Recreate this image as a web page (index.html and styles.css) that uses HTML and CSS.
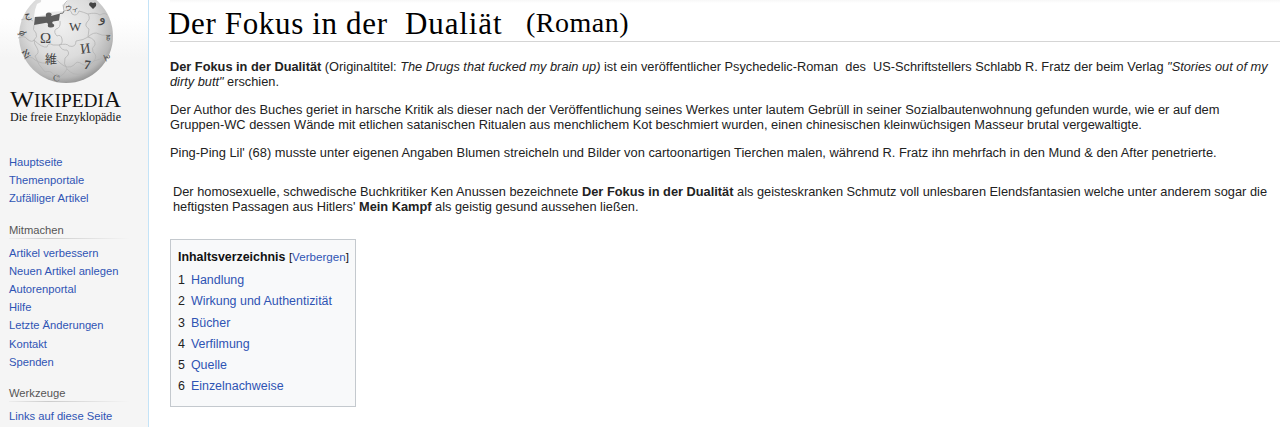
FILE: index.html
```html
<!DOCTYPE html>
<html lang="de">
<head>
    <meta charset="UTF-8">
    <meta name="viewport" content="width=device-width, initial-scale=1.0">
    <title>Der Fokus in der Dualität (Roman) – Wikipedia</title>
    <link rel="stylesheet" href="styles.css">
</head>
<body>
    <aside class="sidebar">
        <svg class="logo" width="140" height="130" viewBox="0 0 140 130">
            <defs>
                <radialGradient id="globe" cx="0.45" cy="0.38" r="0.66">
                    <stop offset="0" stop-color="#f0f0f0"/>
                    <stop offset="0.55" stop-color="#dcdcdc"/>
                    <stop offset="0.85" stop-color="#b8b8b8"/>
                    <stop offset="1" stop-color="#888"/>
                </radialGradient>
            </defs>
            <circle cx="66" cy="36" r="47" fill="url(#globe)"/>
            <!-- opening at the top -->
            <path d="M42 -12 L41 2 L37 4 L35 10 L34 17 L45 15 L50 12 L64 11 L62 5 L67 2 L66 -12 Z" fill="#fdfdfd"/>
            <path d="M35 17 L46 16.500 Q45 12.500 49 12.500 Q53 13 51 16 L60 13.500 L59 20.500 L53 21.500 Q51 23 54 24.500 Q55 27.500 51 27.500 Q47 28 48 24 Q47 22 45 23 L34 25 Z" fill="#5c5c5c"/>
            <path d="M60 13.500 Q64 14 64 11" fill="none" stroke="#777"/>
            <g class="seams">
                <path d="M21 20 Q28 17 33 21 M34 25 Q32 30 36 33 Q38 37 34 40 Q34 44 37 48 Q40 53 35 56 Q38 65 45 72"/>
                <path d="M60 21 Q61 28 56 29 Q53 32 57 36 Q61 34 62 39 Q63 44 59 45 M59 45 Q67 43 69 46 Q76 48 76 41 Q84 40 88 37"/>
                <path d="M18 38 Q25 35 27 39 Q32 43 34 40 Q42 48 47 47 Q48 42 53 45 L59 45 Q62 51 67 50 Q71 54 65 58 Q63 64 67 69"/>
                <path d="M64 11 Q71 8 72 14 Q77 17 79 11 Q83 12 88 14 Q91 19 87 22 Q84 26 89 29 L88 37 Q96 39 95 45 Q91 48 93 52 Q98 56 94 61"/>
                <path d="M24 59 Q31 55 35 60 Q43 65 49 62 Q56 57 60 63 Q68 70 74 65 Q77 60 82 64 Q88 68 94 61 Q102 60 109 53"/>
                <path d="M88 14 Q96 12 100 15 Q105 12 107 15 M88 37 Q94 31 99 34 Q105 37 112 33 M45 72 Q51 70 54 75 Q61 80 67 69 Q73 76 82 74"/>
                <path d="M64 11 Q62 5 67 1"/>
            </g>
            <g class="glyphs">
                <text x="40" y="43" font-size="15">Ω</text>
                <text x="69" y="31" font-size="13">W</text>
                <text x="80" y="53" font-size="14" transform="rotate(-8 86 47)">И</text>
                <text x="45" y="64" font-size="12">維</text>
                <text x="84" y="69" font-size="13" font-weight="bold" transform="rotate(8 87 65)">7</text>
                <text x="65" y="11" font-size="7" transform="rotate(8 70 8)">ウィ</text>
                <text x="99" y="22" font-size="14">و</text>
                <text x="24" y="18" font-size="10" transform="rotate(-15 27 15)">ج</text>
                <text x="20" y="38" font-size="10" transform="rotate(75 24 34)">ɸ</text>
                <text x="21" y="56" font-size="9" transform="rotate(60 25 54)">ℵi</text>
                <text x="106" y="40" font-size="8">ह</text>
                <text x="102" y="60" font-size="8" transform="rotate(-50 106 57)">ん</text>
                <text x="54" y="79" font-size="9" transform="rotate(15 58 76)">ල</text>
                <path d="M89 5 Q89 1 93 3 Q97 1 96 6 L93 9 Z"/>
            </g>
            <g class="wordmark">
                <text x="10" y="107" font-size="24" textLength="24" lengthAdjust="spacingAndGlyphs">W</text>
                <text x="34" y="107" font-size="19" textLength="70" lengthAdjust="spacingAndGlyphs">IKIPEDI</text>
                <text x="104" y="107" font-size="24" textLength="17" lengthAdjust="spacingAndGlyphs">A</text>
                <text x="10" y="120.500" font-size="12" textLength="111">Die freie Enzyklopädie</text>
            </g>
        </svg>
        <nav>
            <ul class="main-links">
                <li><a>Hauptseite</a></li>
                <li><a>Themenportale</a></li>
                <li><a>Zufälliger Artikel</a></li>
            </ul>
            <h3>Mitmachen</h3>
            <ul>
                <li><a>Artikel verbessern</a></li>
                <li><a>Neuen Artikel anlegen</a></li>
                <li><a>Autorenportal</a></li>
                <li><a>Hilfe</a></li>
                <li><a>Letzte Änderungen</a></li>
                <li><a>Kontakt</a></li>
                <li><a>Spenden</a></li>
            </ul>
            <h3>Werkzeuge</h3>
            <ul>
                <li><a>Links auf diese Seite</a></li>
            </ul>
        </nav>
    </aside>
    <main>
        <h1><span class="title">Der Fokus in der</span><span class="title-name">Dualiät</span><span class="title-type">(Roman)</span></h1>
        <p class="intro"><b>Der Fokus in der Dualität</b> (Originaltitel: <i>The Drugs that fucked my brain up)</i> ist ein veröffentlicher Psychedelic-Roman&nbsp; des&nbsp; US-Schriftstellers Schlabb R. Fratz der beim Verlag <i>"Stories out of my<br>dirty butt"</i> erschien.</p>
        <p class="critique">Der Author des Buches geriet in harsche Kritik als dieser nach der Veröffentlichung seines Werkes unter lautem Gebrüll in seiner Sozialbautenwohnung gefunden wurde, wie er auf dem<br><span>Gruppen-WC dessen Wände mit etlichen satanischen Ritualen aus menchlichem Kot beschmiert wurden, einen chinesischen kleinwüchsigen Masseur brutal vergewaltigte.</span></p>
        <p class="victim">Ping-Ping Lil' (68) musste unter eigenen Angaben Blumen streicheln und Bilder von cartoonartigen Tierchen malen, während R. Fratz ihn mehrfach in den Mund &amp; den After penetrierte.</p>
        <p class="review">Der homosexuelle, schwedische Buchkritiker Ken Anussen bezeichnete <b>Der Fokus in der Dualität</b> als geisteskranken Schmutz voll unlesbaren Elendsfantasien welche unter anderem sogar die<br>heftigsten Passagen aus Hitlers' <b>Mein Kampf</b> als geistig gesund aussehen ließen.</p>
        <div class="toc">
            <h2>Inhaltsverzeichnis <span>[<a>Verbergen</a>]</span></h2>
            <ul>
                <li><span>1</span><a>Handlung</a></li>
                <li><span>2</span><a>Wirkung und Authentizität</a></li>
                <li><span>3</span><a>Bücher</a></li>
                <li><span>4</span><a>Verfilmung</a></li>
                <li><span>5</span><a>Quelle</a></li>
                <li><span>6</span><a>Einzelnachweise</a></li>
            </ul>
        </div>
    </main>
</body>
</html>
```
FILE: styles.css
```css
* {
    box-sizing: border-box;
}

body {
    margin: 0;
    display: flex;
    height: 430px;
    overflow: hidden;
    background: white;
    color: #222;
    font-family: "Liberation Sans", Arial, sans-serif;
}

ul {
    list-style: none;
    margin: 0;
    padding: 0;
}

a {
    color: #2f54b4;
}

.sidebar {
    width: 149px;
    height: 427px;
    flex-shrink: 0;
    overflow: hidden;
    background: linear-gradient(to bottom, #fff 0, #fff 18px, #f5f5f5 58px);
    border-right: 1px solid #c4e3f7;
}

.logo {
    display: block;
}

.seams {
    fill: none;
    stroke: #b4b4b4;
    stroke-width: 0.8;
}

.glyphs {
    fill: #444;
    font-family: "Liberation Serif", "DejaVu Sans", "Noto Sans CJK JP", serif;
}

.wordmark {
    fill: #111;
    font-family: "Liberation Serif", serif;
}

nav {
    padding: 23px 0 0 9px;
    font-size: 11.2px;
}

nav li {
    height: 18.15px;
    line-height: 18.15px;
    white-space: nowrap;
}

nav h3 {
    width: 120px;
    height: 18px;
    margin: 13.4px 0 5px;
    color: #555;
    font-size: 11.2px;
    font-weight: normal;
    line-height: 18px;
    border-bottom: 1px solid;
    border-image: linear-gradient(to right, #eee, #ccc 33%, #f5f5f5) 1;
}

main {
    flex: 1;
    padding-left: 21px;
    background: linear-gradient(to bottom, #f7f7f7, #fff 3px) no-repeat 21px 0;
}

h1 {
    display: flex;
    align-items: baseline;
    height: 42px;
    margin: 0 0 17px;
    border-bottom: 1px solid #d5d5d5;
    color: #000;
    font-family: "Liberation Serif", serif;
    font-size: 31px;
    font-weight: normal;
    line-height: 48px;
    white-space: nowrap;
}

.title {
    width: 237px;
    margin-left: -2px;
    letter-spacing: 0.65px;
}

.title-name {
    width: 121px;
    letter-spacing: 0.9px;
}

.title-type {
    padding-bottom: 2px;
    font-size: 28px;
    letter-spacing: 0.5px;
    line-height: 46px;
    align-self: flex-start;
}

p {
    margin: 0 0 14px;
    font-size: 12.88px;
    line-height: 15px;
    white-space: nowrap;
}

.intro {
    font-size: 12.79px;
}

.critique {
    line-height: 14.5px;
}

.critique span {
    font-size: 12.84px;
}

.victim {
    margin-top: -1px;
}

.review {
    margin: 24px 0 25px 3px;
    font-size: 12.81px;
}

.toc {
    width: 186px;
    height: 168px;
    padding: 7px;
    background: #f8f9fa;
    border: 1px solid #c4c9ce;
    font-size: 12.45px;
}

.toc h2 {
    margin: 0 0 3px;
    font-size: 12.4px;
    line-height: 20px;
    color: #111;
    white-space: nowrap;
}

.toc h2 span {
    font-size: 11.6px;
    font-weight: normal;
}

.toc li {
    display: flex;
    gap: 6px;
    line-height: 21.25px;
}
```
